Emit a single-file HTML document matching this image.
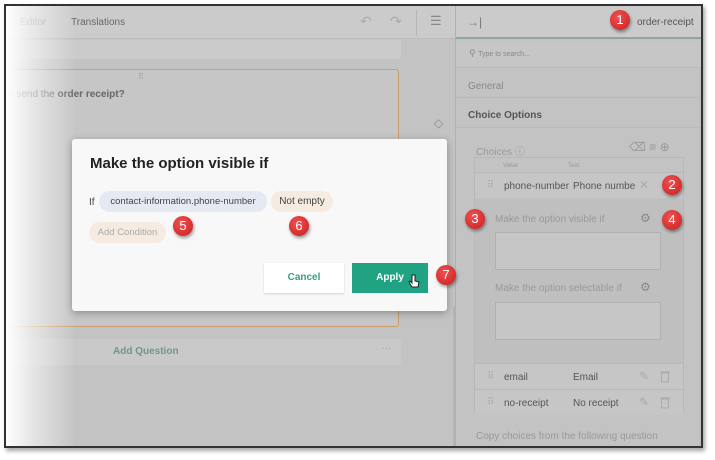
<!DOCTYPE html>
<html><head><style>
*{box-sizing:border-box;margin:0;padding:0}
body{width:715px;height:460px;background:#fff;position:relative;overflow:hidden;font-family:"Liberation Sans",sans-serif;font-size:10px;color:#555}
.a{position:absolute}
.frame{left:4px;top:4px;width:699px;height:444px;border:2px solid #333;background:#c3c3c3;overflow:hidden;box-shadow:2px 3px 4px rgba(0,0,0,.35)}
.badge{position:absolute;width:20px;height:20px;border-radius:50%;background:radial-gradient(circle at 40% 35%,#f05050,#c81e1e);color:#fff;font-size:13px;text-align:center;line-height:20px;box-shadow:1px 2px 3px rgba(0,0,0,.4)}
.row{position:absolute;left:475px;width:202px;height:26px;border-top:1px solid #b8b8b8;background:#c6c6c6;font-size:10px;color:#555}
</style></head><body>
<div class="a frame">
 <div class="a" style="left:0;top:0;width:449px;height:33px;background:#cbcbcb;border-bottom:1px solid #bbb"></div>
 <div class="a" style="left:14px;top:11px;color:#999">Editor</div>
 <div class="a" style="left:65px;top:11px;color:#666">Translations</div>
 <div class="a" style="left:354px;top:7px;font-size:14px;color:#aaa">↶</div>
 <div class="a" style="left:384px;top:7px;font-size:14px;color:#aaa">↷</div>
 <div class="a" style="left:410px;top:4px;width:1px;height:26px;background:#b5b5b5"></div>
 <div class="a" style="left:424px;top:7px;font-size:13px;color:#888">☰</div>
 <div class="a" style="left:0;top:34px;width:395px;height:19px;background:#cbcbcb;border-radius:0 0 3px 3px"></div>
 <div class="a" style="left:-5px;top:63px;width:398px;height:258px;border:1px solid #c99f6a;border-radius:3px;background:#c6c6c6"></div>
 <div class="a" style="left:132px;top:66px;color:#999;font-size:8px">⠿</div>
 <div class="a" style="left:2px;top:83px;color:#666;font-size:10px">o send the <b>order receipt?</b></div>
 <div class="a" style="left:0;top:333px;width:395px;height:26px;background:#c9c9c9;border-radius:3px"></div>
 <div class="a" style="left:107px;top:340px;color:#6d9a86;font-weight:bold;font-size:10px">Add Question</div>
 <div class="a" style="left:375px;top:337px;color:#999">···</div>
 <div class="a" style="left:428px;top:110px;color:#888;font-size:12px">◇</div>
 <div class="a" style="left:447px;top:300px;width:2px;height:140px;background:#b5b5b5"></div>
 <div class="a" style="left:0;top:0;width:70px;height:440px;background:linear-gradient(90deg,#fff 0%,rgba(255,255,255,.6) 35%,rgba(255,255,255,0) 100%)"></div>
 <div class="a" style="left:449px;top:0;width:1px;height:440px;background:#b0b0b0"></div>
 <div class="a" style="left:450px;top:0;width:249px;height:33px;background:#cbcbcb;border-bottom:2px solid #8aa89c"></div>
 <div class="a" style="left:461px;top:9px;color:#777;font-size:12px">→|</div>
 <div class="a" style="left:631px;top:11px;color:#555;font-size:10px">order-receipt</div>
 <div class="a" style="left:450px;top:35px;width:249px;height:27px;background:#c6c6c6;border-bottom:1px solid #b9b9b9"></div>
 <div class="a" style="left:463px;top:42px;color:#888;font-size:9px">⚲ <span style="font-size:7px">Type to search...</span></div>
 <div class="a" style="left:450px;top:63px;width:243px;height:29px;border-bottom:1px solid #b9b9b9"></div>
 <div class="a" style="left:462px;top:75px;color:#888">General</div>
 <div class="a" style="left:462px;top:104px;color:#555;font-weight:bold">Choice Options</div>
 <div class="a" style="left:450px;top:121px;width:243px;height:1px;background:#b9b9b9"></div>
 <div class="a" style="left:693px;top:63px;width:6px;height:377px;background:#bdbdbd"></div>
 <div class="a" style="left:470px;top:137px;color:#999">Choices ⓘ</div>
 <div class="a" style="left:623px;top:134px;color:#999;font-size:12px">⌫ ≡ ⊕</div>
 <div class="a" style="left:468px;top:151px;width:210px;height:256px;border:1px solid #b8b8b8"></div>
 <div class="a" style="left:497px;top:157px;color:#999;font-size:6px">Value</div>
 <div class="a" style="left:562px;top:157px;color:#999;font-size:6px">Text</div>
 <div class="row" style="top:166px;left:469px;width:208px"><span class="a" style="left:12px;top:7px;color:#aaa">⠿</span><span class="a" style="left:29px;top:8px">phone-number</span><span class="a" style="left:98px;top:8px">Phone numbe</span><span class="a" style="left:164px;top:5px;color:#aaa;font-size:12px">✕</span></div>
 <div class="a" style="left:469px;top:193px;width:208px;height:170px;background:#bfbfbf"></div>
 <div class="a" style="left:489px;top:208px;color:#999">Make the option visible if</div>
 <div class="a" style="left:634px;top:205px;color:#888;font-size:12px">⚙</div>
 <div class="a" style="left:489px;top:226px;width:166px;height:38px;border:1px solid #b0b0b0;background:#c6c6c6"></div>
 <div class="a" style="left:489px;top:277px;color:#999">Make the option selectable if</div>
 <div class="a" style="left:634px;top:274px;color:#888;font-size:12px">⚙</div>
 <div class="a" style="left:489px;top:296px;width:166px;height:38px;border:1px solid #b0b0b0;background:#c6c6c6"></div>
 <div class="row" style="top:357px;left:469px;width:208px"><span class="a" style="left:12px;top:7px;color:#aaa">⠿</span><span class="a" style="left:29px;top:8px">email</span><span class="a" style="left:98px;top:8px">Email</span><span class="a" style="left:164px;top:5px;color:#aaa;font-size:12px">✎</span><svg class="a" style="left:185px;top:6px" width="10" height="13"><rect x="1.5" y="3" width="7" height="9" fill="none" stroke="#aaa"/><line x1="0" y1="2" x2="10" y2="2" stroke="#aaa"/></svg></div>
 <div class="row" style="top:383px;left:469px;width:208px"><span class="a" style="left:12px;top:7px;color:#aaa">⠿</span><span class="a" style="left:29px;top:8px">no-receipt</span><span class="a" style="left:98px;top:8px">No receipt</span><span class="a" style="left:164px;top:5px;color:#aaa;font-size:12px">✎</span><svg class="a" style="left:185px;top:6px" width="10" height="13"><rect x="1.5" y="3" width="7" height="9" fill="none" stroke="#aaa"/><line x1="0" y1="2" x2="10" y2="2" stroke="#aaa"/></svg></div>
 <div class="a" style="left:470px;top:425px;color:#999">Copy choices from the following question</div>
</div>
<div class="a" style="left:72px;top:139px;width:375px;height:172px;background:#f8f8f8;border-radius:3px;box-shadow:0 2px 8px rgba(0,0,0,.3)"></div>
<div class="a" style="left:90px;top:155px;font-size:15px;color:#222;font-weight:bold">Make the option visible if</div>
<div class="a" style="left:89px;top:197px;font-size:10px;color:#444">If</div>
<div class="a" style="left:99px;top:191px;width:168px;height:21px;border-radius:11px;background:#e4e9f2;color:#444;font-size:9.5px;line-height:21px;text-align:center">contact-information.phone-number</div>
<div class="a" style="left:271px;top:191px;width:62px;height:21px;border-radius:11px;background:#f6ebe0;color:#444;font-size:10px;line-height:21px;text-align:center">Not empty</div>
<div class="a" style="left:89px;top:222px;width:77px;height:21px;border-radius:11px;background:#f6ebe0;color:#aaa;font-size:9.5px;line-height:21px;text-align:center">Add Condition</div>
<div class="a" style="left:264px;top:263px;width:80px;height:30px;background:#fff;box-shadow:0 1px 2px rgba(0,0,0,.15);color:#3a9c82;font-size:10px;line-height:30px;text-align:center;font-weight:bold">Cancel</div>
<div class="a" style="left:352px;top:263px;width:76px;height:30px;background:#1fa383;color:#fff;font-size:10px;line-height:30px;text-align:center;font-weight:bold">Apply</div>
<svg class="a" style="left:408px;top:274px" width="12" height="14"><path d="M4 1v8l-2-2-1 1 3 5h6l1-5-4-1V1z" fill="#fff" stroke="#222" stroke-width="1"/></svg>
<div class="badge" style="left:610px;top:10px">1</div>
<div class="badge" style="left:662px;top:175px">2</div>
<div class="badge" style="left:465px;top:209px">3</div>
<div class="badge" style="left:662px;top:210px">4</div>
<div class="badge" style="left:173px;top:216px">5</div>
<div class="badge" style="left:289px;top:216px">6</div>
<div class="badge" style="left:436px;top:265px">7</div>
</body></html>
